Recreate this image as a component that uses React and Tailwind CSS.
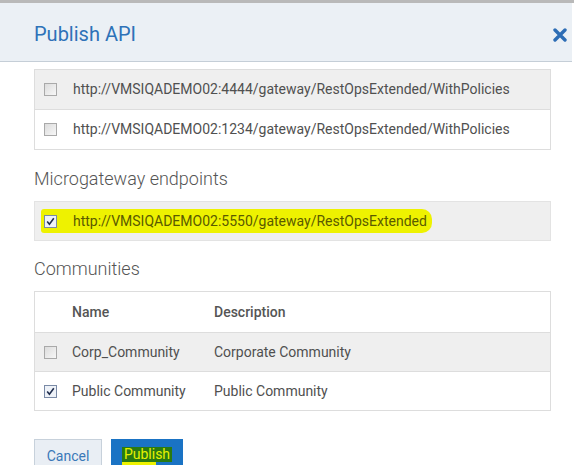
import React from 'react';

const gatewayUrls = [
    'http://VMSIQADEMO02:4444/gateway/RestOpsExtended/WithPolicies',
    'http://VMSIQADEMO02:1234/gateway/RestOpsExtended/WithPolicies',
];

const communities = [
    { name: 'Corp_Community', description: 'Corporate Community', checked: false },
    { name: 'Public Community', description: 'Public Community', checked: true },
];

function Checkbox({ checked }) {
    return (
        <span
            className={`inline-flex w-[13px] h-[13px] shrink-0 items-center justify-center border ${checked ? 'border-[#7a8aa6] bg-[#eef2f8]' : 'border-[#a9a9a9] bg-gradient-to-br from-[#dcdcdc] to-[#f7f7f7]'}`}
        >
            {checked && (
                <svg width="9" height="9" viewBox="0 0 9 9">
                    <path d="M1.2 4.6 L3.4 7.2 L7.8 1.2" fill="none" stroke="#1f2d4d" strokeWidth="1.6" />
                </svg>
            )}
        </span>
    );
}

export default function App() {
    return (
        <div className="w-[574px] h-[465px] overflow-hidden bg-white font-['Roboto',sans-serif] border-t-[3px] border-[#b9b9b9]">
            <div className="w-[572px]">
                {/* Header */}
                <div className="h-[59px] bg-[#ebf0f5] border-b border-[#c5ced7] flex items-center justify-between pl-[34px] pr-[5px]">
                    <h1 className="mt-[3px] text-[20px] text-[#2e72b8] leading-none">Publish API</h1>
                    <svg width="14" height="14" viewBox="0 0 14 14" className="mt-[5px]">
                        <path d="M2 2 L12 12 M12 2 L2 12" stroke="#2d6db5" strokeWidth="3.4" strokeLinecap="round" />
                    </svg>
                </div>

                <div className="pl-[34px] pr-[21px] pt-[7px]">
                    {/* Gateway endpoints */}
                    <div className="border border-[#dddddd]">
                        {gatewayUrls.map((url, i) => (
                            <div
                                key={url}
                                className={`flex items-center gap-[16px] pl-[9px] text-[14px] text-[#505050] ${i % 2 === 0 ? 'h-[39px] bg-[#efefef]' : 'h-[40px] bg-white border-t border-[#dddddd]'}`}
                            >
                                <Checkbox checked={false} />
                                <span>{url}</span>
                            </div>
                        ))}
                    </div>

                    <h2 className="mt-[17px] mb-[10px] text-[18px] font-light leading-[24px] text-[#555555]">Microgateway endpoints</h2>
                    <div className="border border-[#e3e3e3] bg-[#efefef] h-[40px] flex items-center pl-[6px]">
                        <span className="flex items-center gap-[16px] h-[24px] pl-[3px] pr-[5px] bg-[#eef200] rounded-l-[3px] rounded-r-[10px] text-[14px] text-[#5a5a00]">
                            <Checkbox checked={true} />
                            <span>http://VMSIQADEMO02:5550/gateway/RestOpsExtended</span>
                        </span>
                    </div>

                    <h2 className="mt-[16px] mb-[10px] text-[18px] font-light leading-[24px] text-[#555555]">Communities</h2>
                    <div className="border border-[#dddddd]">
                        <div className="h-[40px] flex items-center text-[14px] font-medium text-[#555555] bg-white">
                            <span className="w-[37px]" />
                            <span className="w-[142px]">Name</span>
                            <span>Description</span>
                        </div>
                        {communities.map((c, i) => (
                            <div
                                key={c.name}
                                className={`h-[39px] flex items-center text-[14px] text-[#505050] border-t border-[#dddddd] ${i % 2 === 0 ? 'bg-[#efefef]' : 'bg-white'}`}
                            >
                                <span className="w-[37px] pl-[9px] flex">
                                    <Checkbox checked={c.checked} />
                                </span>
                                <span className="w-[142px]">{c.name}</span>
                                <span>{c.description}</span>
                            </div>
                        ))}
                    </div>

                    {/* Buttons */}
                    <div className="mt-[28px] flex items-start gap-[9px]">
                        <button className="w-[68px] h-[40px] bg-[#e9eef4] border border-[#c7d1db] text-[14px] leading-[16px] text-[#3a78b8] flex justify-center pt-[8px]">
                            Cancel
                        </button>
                        <button className="w-[72px] h-[40px] bg-[#1a73c4] flex justify-center pt-[8px]">
                            <span className="relative bg-[#2a7a12] text-[#e6f200] text-[14px] leading-[15px] px-[2px] h-[15px]">
                                Publish
                                <span className="absolute left-0 top-[15px] w-[34px] h-[5px] bg-[#eef200]" />
                            </span>
                        </button>
                    </div>
                </div>
            </div>
        </div>
    );
}
